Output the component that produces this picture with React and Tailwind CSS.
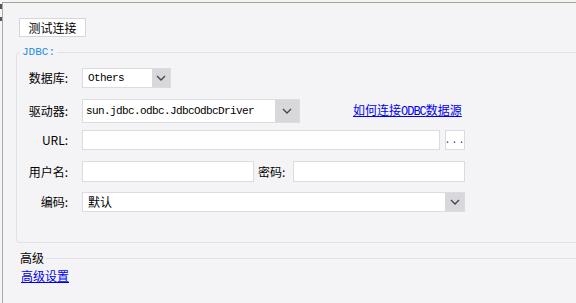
import React from "react";

const cjk = { fontFamily: '"Noto Sans CJK SC", "Noto Sans", sans-serif' };
const mono = { fontFamily: '"Liberation Mono", "Noto Sans CJK SC", monospace' };

function Chevron() {
  return (
    <svg width="10" height="6" viewBox="0 0 10 6" fill="none">
      <path d="M1 1 L5 5 L9 1" stroke="#444" strokeWidth="1.3" />
    </svg>
  );
}

function Label({ children }) {
  return (
    <div className="w-[55px] shrink-0 text-right pr-[4px] text-[12px] leading-none text-black" style={cjk}>
      {children}
    </div>
  );
}

export default function App() {
  return (
    <div className="w-[576px] h-[303px] bg-[#f4f4f6] flex overflow-hidden">
      <div className="w-[2px] shrink-0 flex flex-col pt-[4px] gap-[8px]">
        <div className="w-[2px] h-[5px] bg-[#555]" />
        <div className="w-[2px] h-[4px] bg-[#555]" />
      </div>
      <div className="flex-1 mt-[2px] border-l border-t border-l-[#a8a8a8] border-t-[#a4a496] flex flex-col">
        <div className="pl-[16px] pt-[15px]">
          <button
            className="w-[67px] h-[19px] bg-white border border-[#d6d6d8] text-[12px] leading-none text-black flex items-center justify-center"
            style={cjk}
          >
            测试连接
          </button>
        </div>
        <fieldset className="ml-[13px] mt-[9px] border border-r-0 border-[#e2e2e6] rounded-l-[4px] pb-[30px] pl-0 min-w-0">
          <legend className="ml-[3px] px-[2px] text-[11px] leading-[12px] text-[#1a8ee0]" style={mono}>
            JDBC:
          </legend>
          <div className="flex flex-col">
            <div className="flex items-center mt-[10px] h-[20px]">
              <Label>数据库:</Label>
              <div className="ml-[10px] w-[89px] h-[20px] bg-white border border-[#dcdce0] flex">
                <div className="flex-1 pl-[5px] flex items-center text-[11px] tracking-[-0.6px] text-black" style={mono}>
                  Others
                </div>
                <div className="w-[18px] bg-[#d8d8dc] flex items-center justify-center">
                  <Chevron />
                </div>
              </div>
            </div>
            <div className="flex items-center mt-[11px] h-[24px]">
              <Label>驱动器:</Label>
              <div className="ml-[10px] w-[218px] h-[24px] bg-white border border-[#dcdce0] flex">
                <div className="flex-1 pl-[3px] flex items-center text-[11px] tracking-[-0.6px] text-black" style={mono}>
                  sun.jdbc.odbc.JdbcOdbcDriver
                </div>
                <div className="w-[24px] bg-[#d8d8dc] flex items-center justify-center">
                  <Chevron />
                </div>
              </div>
              <a className="ml-[53px] text-[12px] leading-none text-[#0000ee] underline" style={cjk}>
                如何连接<span className="text-[12px] tracking-[-1px]" style={mono}>ODBC</span>数据源
              </a>
            </div>
            <div className="flex items-center mt-[7px] h-[20px]">
              <Label>URL:</Label>
              <div className="ml-[10px] w-[358px] h-[20px] bg-white border border-[#dcdce0]" />
              <div className="ml-[5px] w-[20px] h-[20px] bg-white border border-[#dcdce0] flex items-center justify-center text-[10px] text-[#702070] tracking-[1px]" style={mono}>
                ...
              </div>
            </div>
            <div className="flex items-center mt-[11px] h-[21px]">
              <Label>用户名:</Label>
              <div className="ml-[10px] w-[172px] h-[21px] bg-white border border-[#dcdce0]" />
              <div className="ml-[4px] w-[35px] text-[12px] leading-none text-black" style={cjk}>
                密码:
              </div>
              <div className="w-[172px] h-[21px] bg-white border border-[#dcdce0]" />
            </div>
            <div className="flex items-center mt-[10px] h-[20px]">
              <Label>编码:</Label>
              <div className="ml-[10px] w-[383px] h-[20px] bg-white border border-[#dcdce0] flex">
                <div className="flex-1 pl-[5px] flex items-center text-[12px] leading-none text-black" style={cjk}>
                  默认
                </div>
                <div className="w-[19px] bg-[#d8d8dc] flex items-center justify-center">
                  <Chevron />
                </div>
              </div>
            </div>
          </div>
        </fieldset>
        <div className="mt-[8px] ml-[12px] flex items-center">
          <span className="pl-[5px] pr-[2px] text-[12px] leading-[14px] text-black" style={cjk}>
            高级
          </span>
          <div className="flex-1 h-px bg-[#e2e2e6]" />
        </div>
        <div className="ml-[18px] mt-[2px] leading-none">
          <a className="text-[12px] leading-[14px] text-[#0000ee] underline" style={cjk}>
            高级设置
          </a>
        </div>
      </div>
    </div>
  );
}
